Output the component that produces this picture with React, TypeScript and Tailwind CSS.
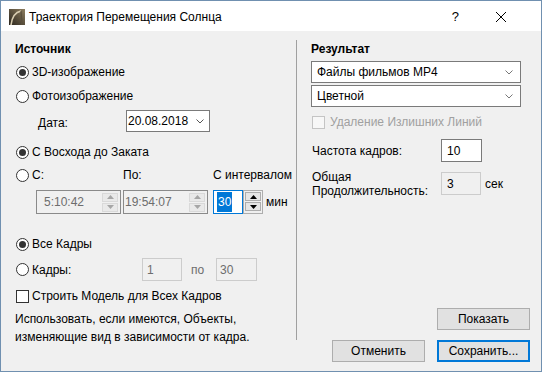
import React from 'react'

const Radio = ({ on, label }: { on?: boolean; label: string }) => (
  <div className="flex items-center pl-[1px]">
    <span className="w-[13px] h-[13px] rounded-full border border-[#333333] bg-white flex items-center justify-center shrink-0">
      {on && <span className="w-[7px] h-[7px] rounded-full bg-[#333333]" />}
    </span>
    <span className="ml-[3px]">{label}</span>
  </div>
)

const Check = ({ label, dis }: { label: string; dis?: boolean }) => (
  <div className="flex items-center pl-[1px]">
    <span className={dis ? 'w-[13px] h-[13px] border border-[#c4c4c4] bg-[#f7f7f7]' : 'w-[13px] h-[13px] border border-[#333333] bg-white'} />
    <span className={dis ? 'ml-[5px] text-[#a0a0a0]' : 'ml-[3px]'}>{label}</span>
  </div>
)

const Chevron = ({ color = '#555555' }: { color?: string }) => (
  <svg width="8" height="5" viewBox="0 0 8 5" className="shrink-0">
    <polyline points="0.5,0.5 4,4 7.5,0.5" fill="none" stroke={color} strokeWidth="1" />
  </svg>
)

const Arrow = ({ up, color }: { up?: boolean; color: string }) => (
  <svg width="7" height="4" viewBox="0 0 7 4">
    <path d={up ? 'M0 4 L3.5 0 L7 4Z' : 'M0 0 L3.5 4 L7 0Z'} fill={color} />
  </svg>
)

const Spin = ({ dis }: { dis?: boolean }) => (
  <div className="flex flex-col gap-[1px] w-[16px] h-[19px]">
    <div className={dis ? 'flex-1 flex items-center justify-center border border-[#d9d9d9] bg-[#e9e9e9]' : 'flex-1 flex items-center justify-center border border-[#adadad] bg-[#e5e5e5]'}>
      <Arrow up color={dis ? '#a6a6a6' : '#000000'} />
    </div>
    <div className={dis ? 'flex-1 flex items-center justify-center border border-[#d9d9d9] bg-[#e9e9e9]' : 'flex-1 flex items-center justify-center border border-[#adadad] bg-[#e5e5e5]'}>
      <Arrow color={dis ? '#a6a6a6' : '#000000'} />
    </div>
  </div>
)

const TimeBox = ({ value, pl }: { value: string; pl: string }) => (
  <div className="w-[85px] h-[24px] border border-[#8a8a8a] bg-[#f0f0f0] flex items-center pr-[2px]">
    <span className={'flex-1 text-[#6d6d6d] ' + pl}>{value}</span>
    <Spin dis />
  </div>
)

const Button = ({ label, primary }: { label: string; primary?: boolean }) => (
  <div className={primary ? 'w-[93px] h-[22px] border-2 border-[#0078d7] bg-[#e1e1e1] flex items-center justify-center' : 'w-[93px] h-[22px] border border-[#adadad] bg-[#e1e1e1] flex items-center justify-center'}>
    {label}
  </div>
)

const AppIcon = () => (
  <svg width="16" height="16" viewBox="0 0 16 16">
    <defs>
      <linearGradient id="ic" x1="0" y1="1" x2="1" y2="0">
        <stop offset="0" stopColor="#2a251d" />
        <stop offset="1" stopColor="#8d7d5e" />
      </linearGradient>
    </defs>
    <rect x="0" y="0" width="16" height="16" fill="url(#ic)" />
    <path d="M2 16 C3 8 7 3 12 2" fill="none" stroke="#d9ceb2" strokeWidth="1.6" />
    <path d="M12 2 L13 16" fill="none" stroke="#5a4f3c" strokeWidth="1.2" />
  </svg>
)

export default function App() {
  return (
    <div className="w-[542px] h-[372px] border border-[#7090b0] bg-[#f0f0f0] flex flex-col font-['Liberation_Sans',sans-serif] text-[12px] text-black">
      <div className="h-[30px] bg-white flex items-center pl-[8px] pt-[2px] shrink-0">
        <AppIcon />
        <span className="ml-[4px] text-[12px]">Траектория Перемещения Солнца</span>
        <span className="ml-auto text-[13px]">?</span>
        <svg width="10" height="10" viewBox="0 0 10 10" className="ml-[37px] mr-[35px]">
          <path d="M0 0 L10 10 M10 0 L0 10" stroke="#000" strokeWidth="1" />
        </svg>
      </div>

      <div className="flex flex-col pt-[9px] pb-[9px] flex-1">
        <div className="h-[300px] flex shrink-0">
          {/* left column */}
          <div className="w-[295px] pl-[14px] flex flex-col">
            <div className="mt-[1px] h-[16px] shrink-0 flex items-center font-bold">Источник</div>
            <div className="mt-[5px] h-[20px] shrink-0 flex items-center"><Radio on label="3D-изображение" /></div>
            <div className="mt-[4px] h-[20px] shrink-0 flex items-center"><Radio label="Фотоизображение" /></div>
            <div className="mt-[4px] h-[22px] shrink-0 flex items-center">
              <span className="ml-[23px] w-[88px] pt-[3px]">Дата:</span>
              <div className="w-[84px] h-[22px] border border-[#7a7a7a] bg-white flex items-center pl-[1px] pr-[5px]">
                <span className="flex-1">20.08.2018</span>
                <Chevron />
              </div>
            </div>
            <div className="mt-[10px] h-[20px] shrink-0 flex items-center"><Radio on label="С Восхода до Заката" /></div>
            <div className="mt-[3px] h-[20px] shrink-0 flex items-center">
              <div className="w-[108px]"><Radio label="С:" /></div>
              <span className="w-[90px]">По:</span>
              <span>С интервалом</span>
            </div>
            <div className="mt-[5px] h-[24px] shrink-0 flex items-center">
              <div className="ml-[21px]"><TimeBox value="5:10:42" pl="pl-[7px]" /></div>
              <div className="ml-[2px]"><TimeBox value="19:54:07" pl="pl-[1px]" /></div>
              <div className="ml-[5px] w-[30px] h-[24px] border border-[#0078d7] bg-white flex items-center pl-[3px]">
                <span className="bg-[#0078d7] text-white leading-[20px] px-[1px]">30</span>
              </div>
              <div className="h-[24px] border border-[#adadad] p-[1px] flex">
                <Spin />
              </div>
              <span className="ml-[3px]">мин</span>
            </div>
            <div className="mt-[20px] h-[20px] shrink-0 flex items-center"><Radio on label="Все Кадры" /></div>
            <div className="mt-[4px] h-[23px] shrink-0 flex items-center">
              <div className="w-[127px]"><Radio label="Кадры:" /></div>
              <div className="w-[40px] h-[23px] border border-[#cccccc] flex items-center pl-[4px] text-[#6d6d6d]">1</div>
              <span className="w-[34px] pl-[9px] text-[#6d6d6d]">по</span>
              <div className="w-[41px] h-[23px] border border-[#cccccc] flex items-center pl-[3px] text-[#6d6d6d]">30</div>
            </div>
            <div className="mt-[5px] h-[20px] shrink-0 flex items-center"><Check label="Строить Модель для Всех Кадров" /></div>
            <div className="mt-[4px] shrink-0 leading-[18px]">
              Использовать, если имеются, Объекты,<br />
              изменяющие вид в зависимости от кадра.
            </div>
          </div>

          <div className="w-[1px] bg-[#a0a0a0]" />

          {/* right column */}
          <div className="flex-1 pl-[14px] flex flex-col">
            <div className="mt-[1px] h-[16px] shrink-0 flex items-center font-bold">Результат</div>
            <div className="mt-[4px] w-[210px] h-[22px] shrink-0 border border-[#7a7a7a] bg-white flex items-center pl-[5px] pr-[7px]">
              <span className="flex-1">Файлы фильмов MP4</span>
              <Chevron color="#777777" />
            </div>
            <div className="mt-[2px] w-[210px] h-[22px] shrink-0 border border-[#7a7a7a] bg-white flex items-center pl-[5px] pr-[7px]">
              <span className="flex-1">Цветной</span>
              <Chevron color="#777777" />
            </div>
            <div className="mt-[5px] h-[20px] shrink-0 flex items-center"><Check dis label="Удаление Излишних Линий" /></div>
            <div className="mt-[7px] h-[23px] shrink-0 flex items-center">
              <span className="w-[130px] pl-[1px]">Частота кадров:</span>
              <div className="w-[41px] h-[23px] border border-[#7a7a7a] bg-white flex items-center pl-[5px]">10</div>
            </div>
            <div className="mt-[10px] h-[23px] shrink-0 flex items-center">
              <span className="w-[130px] pl-[1px] leading-[14px]">Общая<br />Продолжительность:</span>
              <div className="w-[40px] h-[23px] border border-[#cccccc] flex items-center pl-[5px]">3</div>
              <span className="ml-[4px]">сек</span>
            </div>
            <div className="mt-auto mb-[10px] self-end mr-[11px]">
              <Button label="Показать" />
            </div>
          </div>
        </div>

        <div className="h-[22px] flex justify-end gap-[12px] pr-[11px]">
          <Button label="Отменить" />
          <Button primary label="Сохранить..." />
        </div>
      </div>
    </div>
  )
}
